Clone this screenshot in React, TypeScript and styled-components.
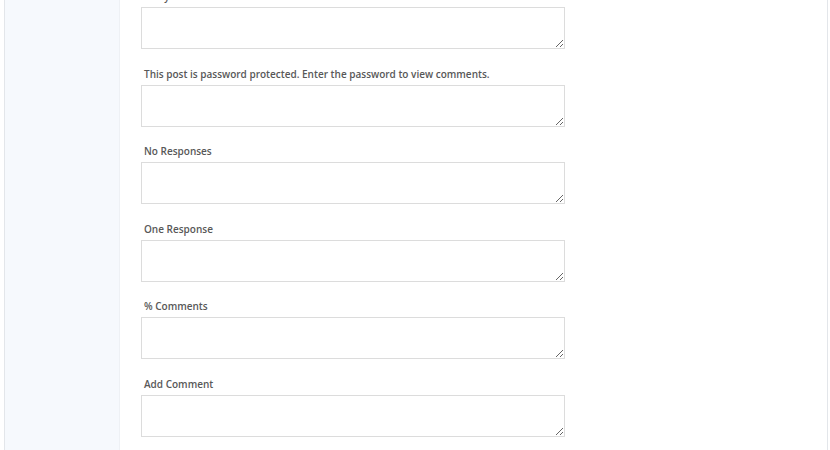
import React from "react";
import styled, { createGlobalStyle } from "styled-components";

const GlobalStyle = createGlobalStyle`
  html, body {
    margin: 0;
    padding: 0;
    background: #ffffff;
    overflow: hidden;
  }
  body {
    font-family: "Open Sans", "Liberation Sans", sans-serif;
  }
`;

const Frame = styled.div`
  display: flex;
  margin: 0 2px 0 4px;
  height: 450px;
  border-left: 1px solid #e3e6ea;
  border-right: 1px solid #e3e6ea;
  overflow: hidden;
`;

const Sidebar = styled.aside`
  width: 114px;
  flex-shrink: 0;
  background: #f6f9fd;
  border-right: 1px solid #eef1f5;
`;

const Main = styled.main`
  flex: 1;
  padding: 0 0 0 21px;
  margin-top: -15px;
`;

const Field = styled.div`
  display: flex;
  flex-direction: column;
  margin-bottom: 13.6px;
`;

const Label = styled.label`
  display: block;
  padding: 3px 0 0 3px;
  margin-bottom: 3px;
  font-size: 10px;
  line-height: 16px;
  font-weight: 600;
  color: #585858;
`;

const TextArea = styled.textarea`
  box-sizing: border-box;
  width: 424px;
  height: 42px;
  margin: 0;
  padding: 4px 6px;
  border: 1px solid #dcdcdc;
  border-radius: 0;
  background: #ffffff;
  font-family: inherit;
  font-size: 12px;
  resize: vertical;
  outline: none;
`;

const fields = [
  "Entry",
  "This post is password protected. Enter the password to view comments.",
  "No Responses",
  "One Response",
  "% Comments",
  "Add Comment",
];

export default function App() {
  return (
    <>
      <GlobalStyle />
      <Frame>
        <Sidebar />
        <Main>
          {fields.map((label, i) => (
            <Field key={i}>
              <Label htmlFor={`field-${i}`}>{label}</Label>
              <TextArea id={`field-${i}`} />
            </Field>
          ))}
        </Main>
      </Frame>
    </>
  );
}
